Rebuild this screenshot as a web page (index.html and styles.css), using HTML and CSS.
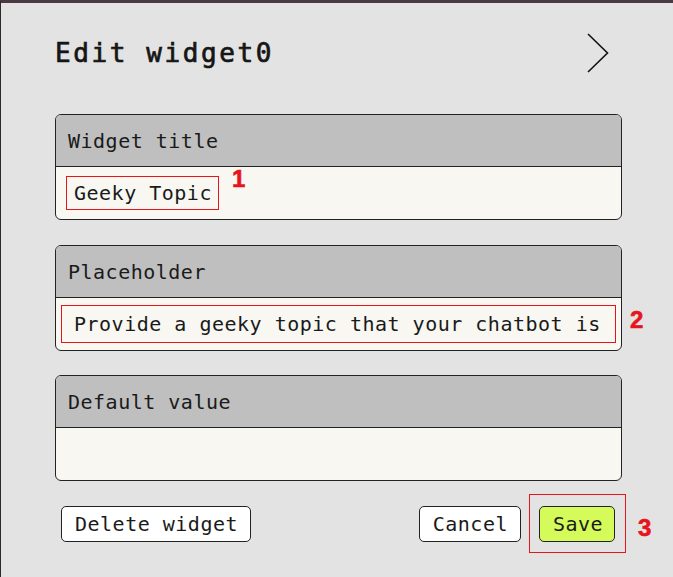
FILE: index.html
```html
<!DOCTYPE html>
<html>
<head>
<meta charset="utf-8">
<link rel="stylesheet" href="styles.css">
</head>
<body>
<div class="page">
  <div class="title-row">
    <h1 class="title">Edit widget0</h1>
    <svg class="chevron" width="28" height="42" viewBox="0 0 28 42"><path d="M4 2 L23.5 21 L4 40" fill="none" stroke="#111" stroke-width="1.6"/></svg>
  </div>

  <div class="field">
    <div class="field-head">Widget title</div>
    <div class="field-body pad-a">
      <span class="value value-a">Geeky Topic</span>
    </div>
    <span class="mark mark-1">1</span>
  </div>

  <div class="field second">
    <div class="field-head">Placeholder</div>
    <div class="field-body pad-b">
      <span class="value value-b">Provide a geeky topic that your chatbot is</span>
    </div>
    <span class="mark mark-2">2</span>
  </div>

  <div class="field third">
    <div class="field-head">Default value</div>
    <div class="field-body"></div>
  </div>

  <div class="actions">
    <button class="btn">Delete widget</button>
    <div class="right">
      <button class="btn">Cancel</button>
      <div class="hl">
        <button class="btn save">Save</button>
        <span class="mark mark-3">3</span>
      </div>
    </div>
  </div>
</div>
</body>
</html>
```

FILE: styles.css
```css
html, body {
  margin: 0;
  padding: 0;
  background: #e3e3e3;
}
body {
  height: 577px;
  box-sizing: border-box;
  border-top: 3px solid #4a3943;
  border-left: 1px solid #2a2a2a;
  font-family: "DejaVu Sans Mono", "Liberation Mono", monospace;
  color: #1a1a1a;
}
.page {
  padding: 34px 47px 0 54px;
}
.title-row {
  display: flex;
  justify-content: space-between;
  align-items: center;
  height: 32px;
  margin-right: 4px;
}
.title {
  margin: 0;
  font-size: 26px;
  line-height: 32px;
  font-weight: normal;
  -webkit-text-stroke: 0.7px #151515;
  letter-spacing: 2.6px;
  color: #151515;
}
.chevron {
  margin-right: 10px;
  display: block;
}
.field {
  position: relative;
  margin-top: 45px;
  margin-right: 4px;
  border: 1px solid #222;
  border-radius: 6px;
  background: #f8f7f2;
}
.field.second { margin-top: 25px; }
.field.third { margin-top: 24px; }
.field-head {
  height: 51px;
  background: #bfbfbf;
  border-bottom: 1px solid #222;
  border-radius: 5px 5px 0 0;
  display: flex;
  align-items: center;
  padding-left: 12px;
  font-size: 20px;
  letter-spacing: 0.5px;
}
.field-body {
  height: 52px;
  display: flex;
  align-items: center;
  border-radius: 0 0 5px 5px;
}
.pad-a { padding-left: 10px; }
.pad-b { padding-left: 5px; }
.value {
  font-size: 20px;
  letter-spacing: 0.5px;
  border: 1px solid #e8141c;
  box-sizing: border-box;
  white-space: nowrap;
  display: flex;
  align-items: center;
}
.value-a {
  height: 34px;
  padding: 0 6px 0 7px;
}
.value-b {
  height: 38px;
  width: 555px;
  padding-left: 12px;
}
.mark {
  position: absolute;
  font-family: "Liberation Sans", Arial, sans-serif;
  font-weight: bold;
  font-size: 24px;
  line-height: 24px;
  color: #e8141c;
  -webkit-text-stroke: 0.6px #e8141c;
}
.mark-1 { left: 176px; top: 52px; }
.mark-2 { left: 574px; top: 62px; }
.actions {
  display: flex;
  justify-content: space-between;
  align-items: center;
  margin-top: 13px;
  padding-left: 6px;
}
.right {
  display: flex;
  align-items: center;
  gap: 8px;
}
.hl {
  position: relative;
  box-sizing: border-box;
  width: 97px;
  height: 59px;
  border: 1px solid #e8141c;
  display: flex;
  align-items: center;
  padding-left: 9px;
}
.mark-3 { left: 108px; top: 21px; }
.btn {
  font-family: "DejaVu Sans Mono", "Liberation Mono", monospace;
  font-size: 20px;
  letter-spacing: 0.5px;
  color: #1a1a1a;
  background: #fff;
  border: 1px solid #222;
  border-radius: 5px;
  height: 36px;
  padding: 0 12px 0 13px;
  line-height: 34px;
  cursor: pointer;
}
.save {
  background: #d4fb5a;
  width: 76px;
}
```
